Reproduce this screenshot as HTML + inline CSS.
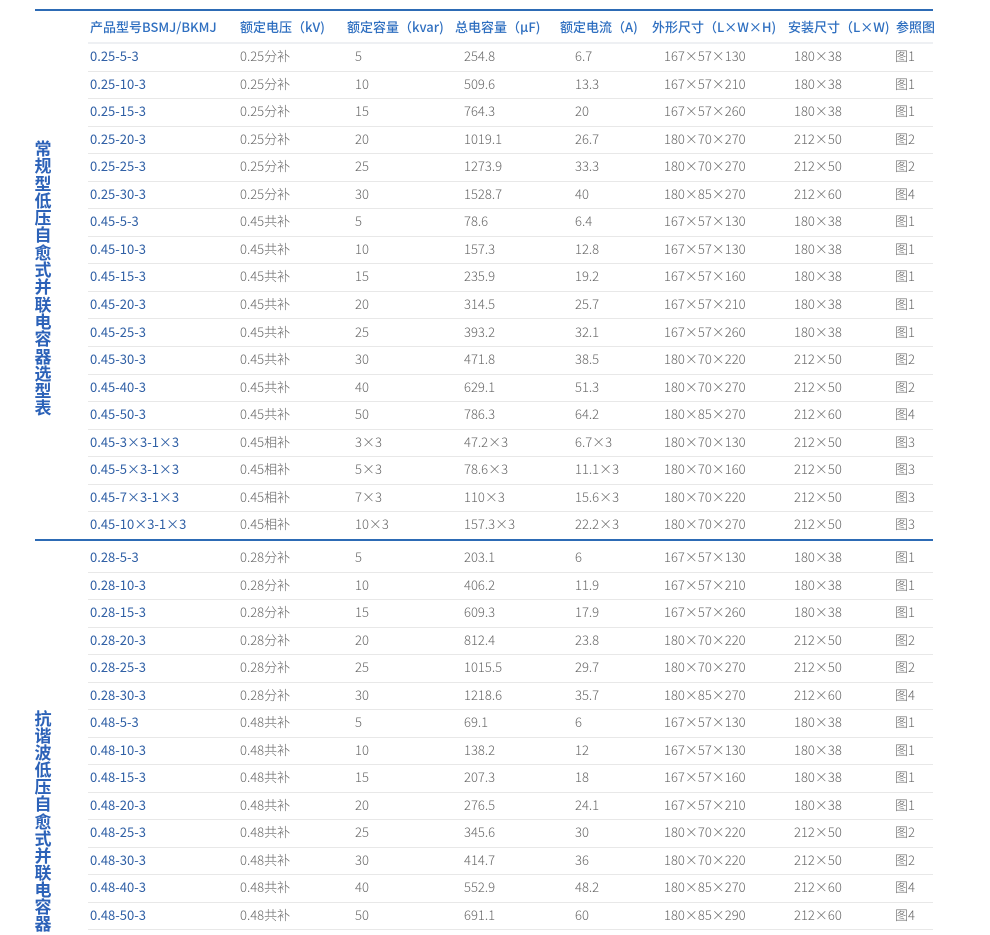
<!DOCTYPE html>
<html><head><meta charset="utf-8">
<style>
body{margin:0;width:990px;height:927px;overflow:hidden;background:#fff;font-family:"Noto Sans CJK SC","Liberation Sans",sans-serif;position:relative}
.hl{position:absolute;left:35px;width:898px;height:2px;background:#2d6bb5}
.row{position:absolute;left:88px;width:845px;height:27.5px;border-bottom:1px solid #e8e8e8;font-size:13px;color:#666;line-height:26px;white-space:nowrap;font-weight:300}
.row span{position:absolute;top:0}
.row span:first-child{color:#2f5fa5;font-weight:400}
.hd{font-weight:500;color:#2f6fc0;font-size:13px;height:31px;line-height:31px;border-bottom:2px solid #eef0f3}
.hd span:first-child{color:#2f6fc0;font-weight:500}
.vt{position:absolute;left:34px;width:18px;font-size:17px;line-height:17.3px;font-weight:bold;color:#2c62b8;text-align:center}
</style></head><body>
<div class="hl" style="top:9px"></div>
<div class="hl" style="top:539px"></div>
<div class="vt" style="top:139px">常规型低压自愈式并联电容器选型表</div>
<div class="vt" style="top:709px;line-height:17.1px">抗谐波低压自愈式并联电容器</div>
<div class="row hd" style="top:11px"><span style="left:2px">产品型号BSMJ/BKMJ</span><span style="left:152px">额定电压（kV)</span><span style="left:259px">额定容量（kvar)</span><span style="left:367px">总电容量（μF)</span><span style="left:472px">额定电流（A)</span><span style="left:564px">外形尺寸（L×W×H)</span><span style="left:700px">安装尺寸（L×W)</span><span style="left:808px">参照图</span></div>
<div id="rows"></div>
<script>
var a=[
["0.25-5-3","0.25分补","5","254.8","6.7","167×57×130","180×38","图1"],
["0.25-10-3","0.25分补","10","509.6","13.3","167×57×210","180×38","图1"],
["0.25-15-3","0.25分补","15","764.3","20","167×57×260","180×38","图1"],
["0.25-20-3","0.25分补","20","1019.1","26.7","180×70×270","212×50","图2"],
["0.25-25-3","0.25分补","25","1273.9","33.3","180×70×270","212×50","图2"],
["0.25-30-3","0.25分补","30","1528.7","40","180×85×270","212×60","图4"],
["0.45-5-3","0.45共补","5","78.6","6.4","167×57×130","180×38","图1"],
["0.45-10-3","0.45共补","10","157.3","12.8","167×57×130","180×38","图1"],
["0.45-15-3","0.45共补","15","235.9","19.2","167×57×160","180×38","图1"],
["0.45-20-3","0.45共补","20","314.5","25.7","167×57×210","180×38","图1"],
["0.45-25-3","0.45共补","25","393.2","32.1","167×57×260","180×38","图1"],
["0.45-30-3","0.45共补","30","471.8","38.5","180×70×220","212×50","图2"],
["0.45-40-3","0.45共补","40","629.1","51.3","180×70×270","212×50","图2"],
["0.45-50-3","0.45共补","50","786.3","64.2","180×85×270","212×60","图4"],
["0.45-3×3-1×3","0.45相补","3×3","47.2×3","6.7×3","180×70×130","212×50","图3"],
["0.45-5×3-1×3","0.45相补","5×3","78.6×3","11.1×3","180×70×160","212×50","图3"],
["0.45-7×3-1×3","0.45相补","7×3","110×3","15.6×3","180×70×220","212×50","图3"],
["0.45-10×3-1×3","0.45相补","10×3","157.3×3","22.2×3","180×70×270","212×50","图3"],
["0.28-5-3","0.28分补","5","203.1","6","167×57×130","180×38","图1"],
["0.28-10-3","0.28分补","10","406.2","11.9","167×57×210","180×38","图1"],
["0.28-15-3","0.28分补","15","609.3","17.9","167×57×260","180×38","图1"],
["0.28-20-3","0.28分补","20","812.4","23.8","180×70×220","212×50","图2"],
["0.28-25-3","0.28分补","25","1015.5","29.7","180×70×270","212×50","图2"],
["0.28-30-3","0.28分补","30","1218.6","35.7","180×85×270","212×60","图4"],
["0.48-5-3","0.48共补","5","69.1","6","167×57×130","180×38","图1"],
["0.48-10-3","0.48共补","10","138.2","12","167×57×130","180×38","图1"],
["0.48-15-3","0.48共补","15","207.3","18","167×57×160","180×38","图1"],
["0.48-20-3","0.48共补","20","276.5","24.1","167×57×210","180×38","图1"],
["0.48-25-3","0.48共补","25","345.6","30","180×70×220","212×50","图2"],
["0.48-30-3","0.48共补","30","414.7","36","180×70×220","212×50","图2"],
["0.48-40-3","0.48共补","40","552.9","48.2","180×85×270","212×60","图4"],
["0.48-50-3","0.48共补","50","691.1","60","180×85×290","212×60","图4"]];
var xs=[2,152,267,376,487,576,706,807],h="";
a.forEach(function(r,i){var t=i<18?43+i*27.55:544+(i-18)*27.5;
h+='<div class="row" style="top:'+t+'px'+(i==17?';border-bottom:none':'')+'">';
r.forEach(function(c,j){h+='<span style="left:'+xs[j]+'px">'+c+'</span>'});h+='</div>'});
document.getElementById('rows').innerHTML=h;
</script>
</body></html>
